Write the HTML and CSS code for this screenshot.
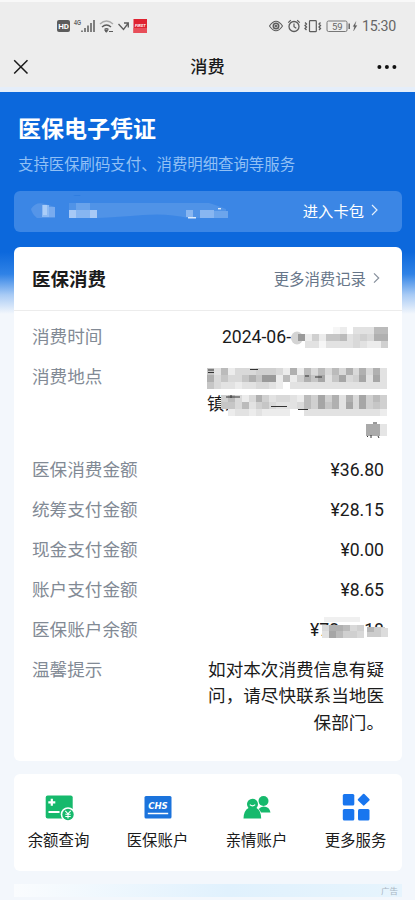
FILE: index.html
```html
<!DOCTYPE html>
<html lang="zh-CN">
<head>
<meta charset="utf-8">
<meta name="viewport" content="width=device-width">
<title>消费</title>
<link rel="stylesheet" href="styles.css">
</head>
<body>
<header class="top">
  <div class="status">
    <svg class="status-left" width="92" height="16" viewBox="0 0 92 16">
      <rect x="0" y="2" width="13" height="12" rx="2" fill="#5c5c5c"/>
      <text x="1.2" y="11" class="hd">HD</text>
      <text x="17" y="7" class="fourg" textLength="7" lengthAdjust="spacingAndGlyphs">4G</text>
      <path d="M25 14v-1.500M28 14v-4M31 14v-6.500M34 14v-9M37 14V2" stroke="#5c5c5c" stroke-width="1.500" fill="none"/>
      <path d="M43 6q6.500-6 13 0" stroke="#aaa" stroke-width="1.400" fill="none"/>
      <path d="M45 9q4.500-4 9 0M47.500 11.500q2-1.600 4 0" stroke="#5c5c5c" stroke-width="1.500" fill="none"/>
      <path d="M47.800 12.500h3l-1.500 1.800zM52 13.500h4" stroke="#5c5c5c" fill="#5c5c5c" stroke-width="1"/>
      <path d="M61.500 6l5 5.500 4.500-6M67 5h4.300v4.500" stroke="#5c5c5c" stroke-width="1.300" fill="none"/>
      <rect x="76.500" y="1" width="13.500" height="14" fill="#df2331"/>
      <path d="M76.500 10h13.500v5H76.500z" fill="#e84e59"/>
      <text x="78" y="9" class="brand">FIRST</text>
    </svg>
    <svg class="status-right" width="90" height="16" viewBox="0 0 90 16" fill="none" stroke="#5c5c5c">
      <path d="M.5 8q6.500-9.500 13 0q-6.500 9.500-13 0z" stroke-width="1.100"/>
      <circle cx="7" cy="8" r="2.700" stroke-width="1.600"/><circle cx="7" cy="8" r="1" fill="#5c5c5c"/>
      <circle cx="25" cy="8.500" r="5" stroke-width="1.300"/><path d="M25 5.500v3.200l2.300 1.500M19.200 4.600l2.600-2.300M30.800 4.600l-2.600-2.300" stroke-width="1.200"/>
      <rect x="40.500" y="2.700" width="6.800" height="11" rx=".8" stroke-width="1.200"/>
      <path d="M36 4.500l1.500 1.500-1.500 1.500 1.500 1.500L36 10.500 37.500 12M51.500 4.500L50 6l1.500 1.500L50 9l1.500 1.500L50 12" stroke-width="1.300"/>
      <rect x="58" y="3" width="20" height="10.500" rx="1.500" stroke="#777" stroke-width="1"/>
      <path d="M80.200 5.500v5.500" stroke-width="1.400"/>
      <path d="M87 3.500l-3 5h1.500l-1 4.500 3.500-5.500h-2z" fill="#5c5c5c" stroke-width=".2"/>
      <text x="63" y="11.500" class="battery">59</text>
    </svg>
    <span class="clock">15:30</span>
  </div>
  <nav class="navbar">
    <svg width="16" height="16" viewBox="0 0 16 16"><path d="M1.200 1.200l13.300 13.300M14.500 1.200L1.200 14.500" stroke="#1a1a1a" stroke-width="1.500"/></svg>
    <h1>消费</h1>
    <svg width="20" height="6" viewBox="0 0 20 6" fill="#111"><circle cx="2.400" cy="3" r="2"/><circle cx="9.900" cy="3" r="2"/><circle cx="17.400" cy="3" r="2"/></svg>
  </nav>
</header>

<main class="page">
  <h2 class="hero-title">医保电子凭证</h2>
  <p class="hero-sub">支持医保刷码支付、消费明细查询等服务</p>
  <div class="pass">
    <svg width="205" height="30" viewBox="0 0 205 30">
      <path d="M0 14q5-8 14-5l10 3v11H6q-5-4-6-9z" fill="#5595e8"/>
      <path d="M11 10h7v12h-7z" fill="#8bb9f3"/><path d="M18 12h6v10h-6z" fill="#78abef"/><path d="M12 10h4v10h-4z" fill="#aacdf8"/>
      <path d="M38 8h140q10 3 17 6v9h-38q-20-5-45-3t-46 3H38z" fill="#5093e7"/>
      <path d="M38 15h28v8H38z" fill="#86b5f1"/><path d="M38 15h7v8h-7zM59 15h7v8h-7z" fill="#a7c9f6"/><path d="M45 8h14v7H45z" fill="#69a3eb"/>
      <path d="M155 15h7v7h-7zM169 15h14v8h-14z" fill="#88b6f1"/><path d="M183 16h14v7h-14z" fill="#6ca5ec"/>
      <path d="M157 22h8v1.500h-8z" fill="#dcebfc"/><path d="M187 13h3v1.400h-3z" fill="#dcebfc"/>
      <path d="M42 1q5-3 8 0z" fill="#2f7de0"/>
    </svg>
    <a class="enter">进入卡包<svg width="8" height="12" viewBox="0 0 8 12"><path d="M1 1l5 5-5 5" fill="none" stroke="#e4effc" stroke-width="1.200"/></svg></a>
  </div>

  <section class="card bill">
    <div class="bill-head">
      <h3>医保消费</h3>
      <a class="more">更多消费记录<svg width="7" height="12" viewBox="0 0 7 12"><path d="M1 1.300l4.700 4.700L1 10.700" fill="none" stroke="#87909c" stroke-width="1.200"/></svg></a>
    </div>
    <dl class="rows">
      <div class="row"><dt>消费时间</dt><dd class="date">2024-06-<svg class="mosaic date-mask" width="97" height="21" viewBox="0 0 97 21"></svg></dd></div>
      <div class="row"><dt>消费地点</dt><dd class="place"><br><span>镇东</span><br><br>
        <svg class="mosaic place-mask" width="181" height="75" viewBox="0 0 181 75"></svg></dd></div>
      <div class="row"><dt>医保消费金额</dt><dd>¥36.80</dd></div>
      <div class="row"><dt>统筹支付金额</dt><dd>¥28.15</dd></div>
      <div class="row"><dt>现金支付金额</dt><dd>¥0.00</dd></div>
      <div class="row"><dt>账户支付金额</dt><dd>¥8.65</dd></div>
      <div class="row"><dt>医保账户余额</dt><dd class="balance"><span>¥72</span><span>18</span><svg class="mosaic balance-mask" width="66" height="21" viewBox="0 0 66 21"></svg></dd></div>
      <div class="row"><dt>温馨提示</dt><dd>如对本次消费信息有疑问，请尽快联系当地医保部门。</dd></div>
    </dl>
  </section>

  <section class="card services">
    <a class="service">
      <svg width="30" height="30" viewBox="0 0 30 30"><rect x="1.700" y="3.500" width="27" height="23" rx="2" fill="#16b96c"/><path d="M7.800 6.800v7M4.300 10.300h7M4.500 20h11" stroke="#fff" stroke-width="2.200"/><circle cx="24" cy="22.500" r="7.300" fill="#fff"/><circle cx="24" cy="22.500" r="5.700" fill="#16b96c"/><path d="M21.300 18.800l2.700 3 2.700-3M24 21.800v4.700M21.300 22.200h5.400M21.300 24.500h5.400" fill="none" stroke="#fff" stroke-width="1.100"/></svg>
      <span>余额查询</span>
    </a>
    <a class="service">
      <svg width="30" height="30" viewBox="0 0 30 30"><rect x="1.500" y="4" width="27" height="22.500" rx="1.500" fill="#1b73dc"/><text x="5.200" y="16.500" class="chs" textLength="19.500" lengthAdjust="spacingAndGlyphs">CHS</text><path d="M4.800 21.500h20.400" stroke="#fff" stroke-width="1.500"/></svg>
      <span>医保账户</span>
    </a>
    <a class="service">
      <svg width="30" height="30" viewBox="0 0 30 30" fill="#16b96c"><circle cx="21.500" cy="9" r="5"/><path d="M16 20.500v-3q3-3 5.500-3 6 0 7 6z"/><path d="M1.500 26.500q.2-8 5-10.500a5.500 5.500 0 1 1 8 0q4.500 2.500 4.700 10.500z" stroke="#fff" stroke-width="1.400" paint-order="stroke"/><path d="M7.800 12.600q2.700 2.400 5.400 0" fill="none" stroke="#fff" stroke-width="1.200"/></svg>
      <span>亲情账户</span>
    </a>
    <a class="service">
      <svg width="30" height="30" viewBox="0 0 30 30" fill="#1976ef"><rect x="1.800" y="2" width="11.500" height="11.500" rx="1.500"/><rect x="1.800" y="17" width="11.500" height="11.500" rx="1.500"/><rect x="17" y="17" width="11.500" height="11.500" rx="1.500"/><rect x="18.200" y="3.200" width="9" height="9" rx="1" transform="rotate(45 22.700 7.700)"/></svg>
      <span>更多服务</span>
    </a>
  </section>

  <aside class="ad"><span>广告</span></aside>
</main>
<script src="mosaic.js"></script>
</body>
</html>
```

FILE: styles.css
```css
* { box-sizing: border-box; margin: 0; padding: 0; }
body {
  width: 415px;
  height: 900px;
  overflow: hidden;
  background: #f3f7fc;
  color: #1b1b1b;
  font-family: Roboto, "Noto Sans CJK SC", sans-serif;
}
svg { display: block; flex: none; }

.top {
  height: 92px;
  background: #ededed;
  border-top: 2px solid #f8f8f8;
  border-bottom: 5px solid #e5eefa;
}
.status {
  display: flex;
  align-items: center;
  height: 48px;
  padding: 0 19px 0 57px;
}
.status-left { margin-right: 120px; }
.status-right { margin-right: 3px; }
.clock { font-size: 14.2px; color: #666; letter-spacing: -0.3px; white-space: nowrap; }
.hd { font: bold 8px Roboto, sans-serif; fill: #fff; }
.fourg { font: bold 7.5px "Liberation Sans", sans-serif; fill: #5c5c5c; }
.brand { font: italic bold 4px Roboto, sans-serif; fill: #fff; }
.battery { font: 9.5px Roboto, sans-serif; fill: #666; stroke: none; }
.navbar {
  display: grid;
  grid-template-columns: 1fr auto 1fr;
  align-items: center;
  height: 34px;
  padding: 0 18px 0 13px;
}
.navbar > svg:last-child { justify-self: end; }
.navbar h1 { margin-left: 5px; font-size: 17.2px; font-weight: 500; line-height: 26px; }

.page {
  height: 808px;
  padding: 0 14px;
  background:
    linear-gradient(#0c68dc 0, #0c68dc 160px, #2f82e6 182px, #a9cbf5 203px, #f3f7fc 222px);
}
.hero-title {
  padding: 21px 0 0 4px;
  font-size: 23px;
  line-height: 34px;
  color: #fff;
}
.hero-sub {
  padding: 6px 0 0 4px;
  font-size: 15.4px;
  line-height: 24px;
  color: #91c0f5;
}
.pass {
  display: flex;
  align-items: center;
  justify-content: space-between;
  height: 41px;
  margin: 14px -1px 0 0;
  padding: 0 23px 3px 17px;
  border-radius: 6px;
  background: #3b86e5;
}
.enter, .more { display: flex; align-items: center; }
.enter { gap: 7px; font-size: 15.3px; color: #fff; }

.card { background: #fff; border-radius: 6px; }
.bill { height: 514px; margin-top: 15px; margin-right: -1px; }
.bill-head {
  display: flex;
  align-items: center;
  justify-content: space-between;
  height: 64px;
  padding: 0 22px 2px 18px;
  border-bottom: 1px solid #ececec;
}
.bill-head h3 { font-size: 18.5px; }
.more { gap: 7px; font-size: 15.4px; color: #677689; }
.rows { display: grid; gap: 13.2px; padding: 13px 18px 0; }
.row {
  display: flex;
  justify-content: space-between;
  font-size: 17.6px;
  line-height: 26.7px;
}
.row dt { color: #828a95; }
.row dd { width: 177px; text-align: right; }
.row .date { display: flex; justify-content: flex-end; align-items: center; width: auto; margin-right: -4px; }
.row .place { position: relative; height: 80.1px; text-align: left; }
.place-mask { position: absolute; left: 0; top: 3px; }
.row .balance { position: relative; display: flex; justify-content: space-between; width: 74px; }
.balance-mask { position: absolute; left: 12px; top: 0; }

.services {
  display: grid;
  grid-template-columns: repeat(4, 99px);
  height: 97px;
  margin: 13px -1px 0 0;
  padding-top: 18px;
}
.service {
  display: flex;
  flex-direction: column;
  align-items: center;
  gap: 7px;
  margin-left: -5px;
  margin-right: 5px;
  font-size: 15.4px;
  line-height: 24px;
}
.chs { font: italic bold 8.5px "DejaVu Sans", sans-serif; fill: #fff; }
.ad {
  display: flex;
  justify-content: flex-end;
  height: 13px;
  margin: 13px -1px 0 0;
  padding: 1px 4px 0 0;
  background: linear-gradient(90deg, #fafcfe, #e0f1fd 55%, #e6f4fd);
  font-size: 8.5px;
  line-height: 13px;
  color: #a9b6c3;
}
```

FILE: mosaic.js
```js
// Privacy masks: each character is the darkness of one cell, "." leaves it clear.
const shade = {
  0: '#fff', 1: '#f6f6f6', 2: '#ececec', 3: '#e2e2e2', 4: '#d9d9d9', 5: '#d0d0d0',
  6: '#c6c6c6', 7: '#bbb', 8: '#b0b0b0', 9: '#a6a6a6', a: '#9a9a9a', b: '#8f8f8f'
};
const size = 6.93;
function fill(svg, shapes) { svg.innerHTML = shapes.join(''); }
function rect(x, y, w, h, color) {
  return `<rect x="${x}" y="${y}" width="${w}" height="${h}" fill="${color}" shape-rendering="crispEdges"/>`;
}
function cells(rows, x0, y0) {
  const out = [];
  rows.forEach((row, r) => [...row].forEach((c, i) => {
    if (c !== '.') out.push(rect(x0 + i * size, y0 + r * size, size, size, shade[c]));
  }));
  return out;
}
fill(document.querySelector('.date-mask'), [
  '<ellipse cx="6" cy="11" rx="6" ry="6.500" fill="#d4d4d4"/>',
  ...cells(['.....12.333773', '825266734548853', '.33133334322553'].map(r => r.slice(0, 13)), 7, 0),
  '<rect x="7" y="7" width="7" height="7" fill="#9a9a9a"/>'
]);
fill(document.querySelector('.place-mask'), [
  ...cells(['63724445554282747474848483', '84644686aa2725869369459393', '64332334432033333333333333'], 0, 1),
  ...cells(['.57424853443275958384957583', '.66473564333475968394956583', '..2332322220.333333333332'].map(r => '.' + r.slice(0, 25)), 0, 28),
  rect(159, 57, 14, 12, '#aaa'), rect(173, 57, 7, 12, '#e5e5e5'),
  '<path d="M1 3h6M1 5.500h6M43 2.500h8M98 9h4M108 10h7" stroke="#333" fill="none"/>',
  '<path d="M64 39.500h16M91 42.500h10" stroke="#333" fill="none"/>',
  '<path d="M19 30h14M24 28v3" stroke="#333" fill="none"/>',
  '<path d="M166 56h4M160 70l1 -1M164 68v3M171 69l1 2" stroke="#333" fill="none"/>'
]);
fill(document.querySelector('.balance-mask'), [
  rect(0, 10, 66, 11, '#fff'),
  rect(2, 0, 36, 5, '#f0f0f0'),
  ...cells(['488745', '397554'], 0, 7.5),
  rect(45, 10, 18, 10, '#ccc'), rect(45, 10, 7, 5, '#b5b5b5'), rect(59, 11, 7, 9, '#dcdcdc')
]);
```
